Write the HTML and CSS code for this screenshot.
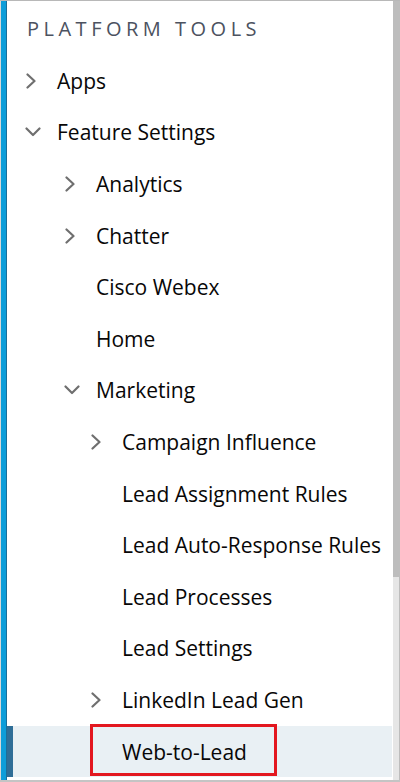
FILE: index.html
```
<!DOCTYPE html>
<html>
<head>
<meta charset="utf-8">
<link rel="stylesheet" href="styles.css">
</head>
<body>
<div class="frame">
  <div class="accent"></div>
  <div class="panel">
    <div class="heading">PLATFORM TOOLS</div>
    <ul class="tree">
      <li class="row l1"><span class="chev"><svg width="12" height="16" viewBox="0 0 12 16"><path d="M2.5 1.5 L9.5 8 L2.5 14.5" /></svg></span><span class="label">Apps</span></li>
      <li class="row l1"><span class="chev"><svg width="16" height="10" viewBox="0 0 16 10"><path d="M1.5 1.5 L8 8 L14.5 1.5" /></svg></span><span class="label">Feature Settings</span></li>
      <li class="row l2"><span class="chev"><svg width="12" height="16" viewBox="0 0 12 16"><path d="M2.5 1.5 L9.5 8 L2.5 14.5" /></svg></span><span class="label">Analytics</span></li>
      <li class="row l2"><span class="chev"><svg width="12" height="16" viewBox="0 0 12 16"><path d="M2.5 1.5 L9.5 8 L2.5 14.5" /></svg></span><span class="label">Chatter</span></li>
      <li class="row l2"><span class="chev"></span><span class="label">Cisco Webex</span></li>
      <li class="row l2"><span class="chev"></span><span class="label">Home</span></li>
      <li class="row l2"><span class="chev"><svg width="16" height="10" viewBox="0 0 16 10"><path d="M1.5 1.5 L8 8 L14.5 1.5" /></svg></span><span class="label">Marketing</span></li>
      <li class="row l3"><span class="chev"><svg width="12" height="16" viewBox="0 0 12 16"><path d="M2.5 1.5 L9.5 8 L2.5 14.5" /></svg></span><span class="label">Campaign Influence</span></li>
      <li class="row l3"><span class="chev"></span><span class="label">Lead Assignment Rules</span></li>
      <li class="row l3"><span class="chev"></span><span class="label">Lead Auto-Response Rules</span></li>
      <li class="row l3"><span class="chev"></span><span class="label">Lead Processes</span></li>
      <li class="row l3"><span class="chev"></span><span class="label">Lead Settings</span></li>
      <li class="row l3"><span class="chev"><svg width="12" height="16" viewBox="0 0 12 16"><path d="M2.5 1.5 L9.5 8 L2.5 14.5" /></svg></span><span class="label">LinkedIn Lead Gen</span></li>
      <li class="row l3 selected"><span class="chev"></span><span class="label">Web-to-Lead</span><span class="highlight"></span></li>
    </ul>
  </div>
  <div class="scrollbar"><div class="thumb"></div></div>
</div>
</body>
</html>
```

FILE: styles.css
```
html, body {
  margin: 0;
  padding: 0;
  background: #ffffff;
}
body {
  font-family: "Open Sans", "Noto Sans", sans-serif;
  color: #080707;
}
.frame {
  width: 400px;
  height: 782px;
  box-sizing: border-box;
  border-top: 1px solid #b8b8b8;
  border-bottom: 2px solid #c4c4c4;
  display: flex;
  overflow: hidden;
}
.accent {
  flex: none;
  background: #0d9dd9;
  border-left: 1px solid #d8d8d8;
  border-right: 1px solid #1a6e99;
  box-sizing: border-box;
  width: 7px;
}
.panel {
  flex: 1;
  display: flex;
  flex-direction: column;
  min-width: 0;
}
.heading {
  height: 54px;
  display: flex;
  align-items: center;
  padding-left: 20px;
  font-size: 20px;
  letter-spacing: 4.5px;
  color: #4c5260;
  font-weight: 400;
  white-space: nowrap;
}
.tree {
  list-style: none;
  margin: 0;
  padding: 0;
}
.row {
  height: 51.6px;
  display: flex;
  align-items: center;
  position: relative;
  font-size: 21px;
  white-space: nowrap;
}
.chev {
  width: 30px;
  flex: none;
  display: flex;
  align-items: center;
}
.chev svg path {
  fill: none;
  stroke: #6f6f6f;
  stroke-width: 2.2;
  stroke-linecap: round;
  stroke-linejoin: round;
}
.l1 { padding-left: 18px; }
.l2 { padding-left: 57px; }
.l3 { padding-left: 83px; }
.label { margin-left: 2px; }
.selected {
  background: #e9f0f4;
  box-shadow: inset 6px 0 0 #2f6e97;
}
.highlight {
  position: absolute;
  left: 83px;
  top: -2px;
  width: 187px;
  height: 52px;
  border: 3px solid #e3171f;
  box-sizing: border-box;
}
.scrollbar {
  width: 8px;
  flex: none;
  background: #e6e6e6;
  border-left: 1px solid #ffffff;
  border-right: 1px solid #bdbdbd;
  box-sizing: border-box;
  display: flex;
  flex-direction: column;
}
.thumb {
  height: 576px;
  background: #bdbdbd;
}
```
